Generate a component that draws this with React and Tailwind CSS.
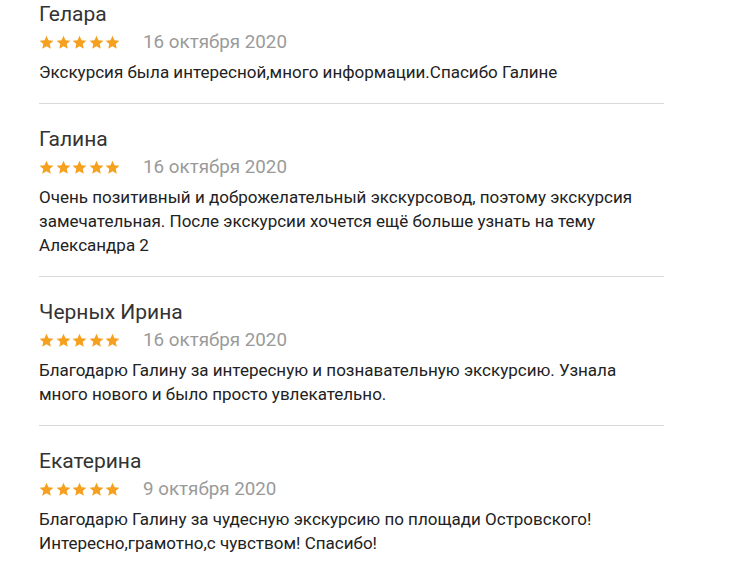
import React from 'react';

const reviews = [
  {
    name: 'Гелара',
    date: '16 октября 2020',
    text: 'Экскурсия была интересной,много информации.Спасибо Галине',
  },
  {
    name: 'Галина',
    date: '16 октября 2020',
    text: 'Очень позитивный и доброжелательный экскурсовод, поэтому экскурсия замечательная. После экскурсии хочется ещё больше узнать на тему Александра 2',
  },
  {
    name: 'Черных Ирина',
    date: '16 октября 2020',
    text: 'Благодарю Галину за интересную и познавательную экскурсию. Узнала много нового и было просто увлекательно.',
  },
  {
    name: 'Екатерина',
    date: '9 октября 2020',
    text: 'Благодарю Галину за чудесную экскурсию по площади Островского! Интересно,грамотно,с чувством! Спасибо!',
  },
];

const Star = () => (
  <svg viewBox="0 0 24 24" className="w-[15px] h-[15px]" fill="#f5a01e">
    <path d="M12 1l3.2 7.3 7.9.7-6 5.3 1.8 7.8L12 18l-6.9 4.1 1.8-7.8-6-5.3 7.9-.7z" />
  </svg>
);

const Review = ({ review, last }) => (
  <div className={last ? '' : 'border-b border-[#d9d9d9] pb-[19px]'}>
    <div className="text-[21px] leading-[28px] text-[#333]">{review.name}</div>
    <div className="flex items-center h-[28px]">
      <div className="flex gap-[1.5px]">
        {[0, 1, 2, 3, 4].map((i) => (
          <Star key={i} />
        ))}
      </div>
      <span className="ml-[23px] text-[18.8px] leading-[28px] text-[#9a9a9a]">{review.date}</span>
    </div>
    <p className="mt-1 text-[17px] leading-[24px] text-[#222]">{review.text}</p>
  </div>
);

export default function App() {
  return (
    <div
      className="w-[736px] h-[570px] bg-white overflow-hidden"
      style={{ fontFamily: 'Roboto, "Liberation Sans", sans-serif' }}
    >
      <div className="ml-[39px] w-[625px] flex flex-col gap-[21px]">
        {reviews.map((r, i) => (
          <Review key={i} review={r} last={i === reviews.length - 1} />
        ))}
      </div>
    </div>
  );
}
